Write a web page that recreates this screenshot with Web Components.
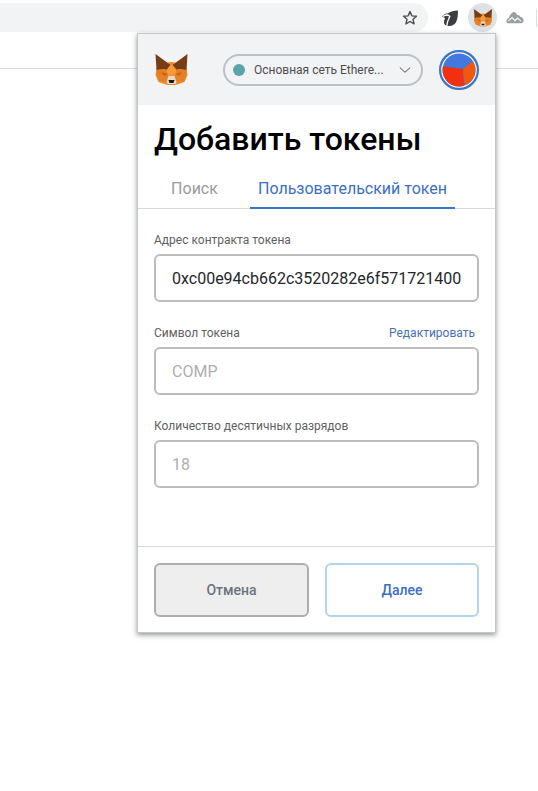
<!DOCTYPE html>
<html lang="ru">
<head>
<meta charset="utf-8">
<title>Добавить токены</title>
<style>
  html, body { margin: 0; height: 100%; background: #fff; }
  body { font-family: Roboto, "Liberation Sans", sans-serif; position: relative; height: 791px; overflow: hidden; }
</style>
</head>
<body>

<browser-toolbar></browser-toolbar>
<mm-popup>
  <mm-header slot="header"></mm-header>
  <mm-tabs slot="tabs" active="Пользовательский токен"></mm-tabs>
  <mm-field label="Адрес контракта токена" value="0xc00e94cb662c3520282e6f571721400"></mm-field>
  <mm-field label="Символ токена" action="Редактировать" placeholder="COMP"></mm-field>
  <mm-field label="Количество десятичных разрядов" placeholder="18"></mm-field>
  <mm-button slot="footer" kind="default">Отмена</mm-button>
  <mm-button slot="footer" kind="secondary">Далее</mm-button>
</mm-popup>

<script>
//fox head is shared between the toolbar and the popup header
const foxSvg = (w, h) => `
<svg width="${w}" height="${h}" viewBox="0 0 32 32" style="display:block">
  <polygon points="2,10 16,8 30,10 32,21 29,28 20,31 12,31 3,28 0,21" fill="#ee8a2a"/>
  <polygon points="0,0 15,11 11,16 9,15 1,16" fill="#763d16"/>
  <polygon points="32,0 17,11 21,16 23,15 31,16" fill="#763d16"/>
  <polygon points="1,16 9,15 11,16 13,22 11,28 4,27 1,21" fill="#e58024"/>
  <polygon points="31,16 23,15 21,16 19,22 21,28 28,27 31,21" fill="#e58024"/>
  <polygon points="11,16 15,11 17,11 21,16 19,22 13,22" fill="#f49a3c"/>
  <polygon points="5,18 12,20 9,22" fill="#b9661f"/>
  <polygon points="27,18 20,20 23,22" fill="#b9661f"/>
  <polygon points="13,22 19,22 21,28 20,30 12,30 11,28" fill="#ead9c4"/>
  <polygon points="13,26 19,26 18,29 14,29" fill="#20190f"/>
</svg>`

class BrowserToolbar extends HTMLElement {
  constructor() {
    super()
    this.attachShadow({ mode: "open" })
    this.shadowRoot.innerHTML = `
    <style>
      :host { display: block; height: 69px; box-sizing: border-box; border-bottom: 1px solid #dadce0; background: #fff; }
      .row { display: flex; align-items: center; height: 32px; }
      .omnibox { width: 428px; height: 29px; margin-top: 3px; flex: none; box-sizing: border-box; background: #f1f3f4;
        border-radius: 0 15px 15px 0; display: flex; align-items: center; justify-content: flex-end; padding-right: 10px; }
      .ext { display: flex; align-items: center; margin-left: 14px; margin-top: 3px; }
      .active { width: 29px; height: 29px; border-radius: 50%; background: #dee1e6; display: flex; align-items: center; justify-content: center; margin-left: 10px; }
      .cloud { margin-left: 9px; }
      .sep { width: 1px; height: 18px; background: #dadce0; margin-left: 12px; }
    </style>
    <div class="row">
      <div class="omnibox">
        <svg width="16" height="16" viewBox="0 0 16 16"><path d="M8 1.6l1.9 4.3 4.6.4-3.5 3 1.1 4.6L8 11.5l-4.1 2.4L5 9.3l-3.5-3 4.6-.4z" fill="none" stroke="#4a4d50" stroke-width="1.4" stroke-linejoin="round"/></svg>
      </div>
      <div class="ext">
        <svg width="16" height="16" viewBox="0 0 16 16"><path d="M16 0.500c0 9-1.500 15.500-9 15.500H6C4 16 2 14.500 2 12.500c0-1.500.3-3 1-4.500L0 6.500C1.500 4.500 3.500 3 5.500 3.500 8.500 1.500 12 .5 16 .5z" fill="#3b3e41"/><path d="M1 6.500c2.500-2 5-1.800 6.800-.3C6.500 9 5 12 4.800 16" fill="none" stroke="#fff" stroke-width="1.300"/><circle cx="5" cy="5.300" r=".7" fill="#fff"/></svg>
        <div class="active" id="fox"></div>
        <svg class="cloud" width="18" height="13" viewBox="0 0 18 13"><path d="M.8 12C0 9.500 1 7.500 2.800 7 3.600 4.500 5.500 1.500 7.800.8c1.700.5 2.800 2 3.400 3.200 1.200-.3 2.300.4 3 1.700 2.300.2 3.600 2.200 3.300 4.300-.2 1.200-1 2.200-2.200 2.200H2.500C1.700 12.200 1 12.200.8 12z" fill="#9c9fa2"/><path d="M2.500 9.800l3.500-3.200 3 3 2.500-2.500 3.500 3" fill="none" stroke="#fff" stroke-width="1.100"/></svg>
        <div class="sep"></div>
      </div>
    </div>`
    this.shadowRoot.querySelector("#fox").innerHTML = foxSvg(20, 18)
  }
}
customElements.define("browser-toolbar", BrowserToolbar)

//popup hangs over the page from the extension icon
class MmPopup extends HTMLElement {
  constructor() {
    super()
    this.attachShadow({ mode: "open" })
    this.shadowRoot.innerHTML = `
    <style>
      :host { display: flex; flex-direction: column; position: absolute; left: 137px; top: 33px; width: 359px; height: 600px;
        box-sizing: border-box; border: 1px solid #c4c6c8; background: #fff; box-shadow: 0 2px 5px rgba(60,64,67,.55); }
      h1 { margin: 0; padding: 13px 16px 0; font: 500 32px/42px Roboto, sans-serif; color: #000; white-space: nowrap; }
      .fields { display: flex; flex-direction: column; gap: 24px; padding: 24px 16px 0; flex: 1; }
      .footer { display: grid; grid-template-columns: 155px 154px; gap: 16px; padding: 16px 16px 15px; border-top: 1px solid #d6d9dc; }
    </style>
    <slot name="header"></slot>
    <h1>Добавить токены</h1>
    <slot name="tabs"></slot>
    <div class="fields"><slot></slot></div>
    <div class="footer"><slot name="footer"></slot></div>`
  }
}
customElements.define("mm-popup", MmPopup)

class MmHeader extends HTMLElement {
  constructor() {
    super()
    this.attachShadow({ mode: "open" })
    this.shadowRoot.innerHTML = `
    <style>
      :host { display: flex; align-items: center; height: 71px; flex: none; box-sizing: border-box; background: #f2f3f4; padding: 0 16px 0 17px; }
      .fox { width: 33px; flex: none; }
      .pill { margin-left: 35px; width: 200px; height: 32px; box-sizing: border-box; border: 2px solid #bbc0c5; border-radius: 16px; display: flex; align-items: center;
        padding-left: 8px; font: 400 12px Roboto, sans-serif; color: #4d4d4d; background: #f2f3f4; }
      .dot { width: 12px; height: 12px; border-radius: 50%; background: #5ba4aa; flex: none; margin-right: 9px; }
      .name { width: 132px; white-space: nowrap; }
      .chev { margin-left: 13px; }
      .avatar { margin-left: auto; width: 40px; height: 40px; flex: none; }
    </style>
    <div class="fox"></div>
    <div class="pill">
      <span class="dot"></span>
      <span class="name">Основная сеть Ethere...</span>
      <svg class="chev" width="12" height="8" viewBox="0 0 12 8"><path d="M.8 1.500L6 6.300l5.200-4.800" fill="none" stroke="#4a4d50" stroke-width="1"/></svg>
    </div>
    <svg class="avatar" viewBox="0 0 40 40">
      <defs><clipPath id="c"><circle cx="20" cy="20" r="16.500"/></clipPath></defs>
      <circle cx="20" cy="20" r="18.900" fill="#fff" stroke="#3b74c4" stroke-width="2.200"/>
      <g clip-path="url(#c)">
        <rect width="40" height="40" fill="#4378dc"/>
        <polygon points="2,16 24,19 25,38 2,38" fill="#f2300f"/>
        <polygon points="24,19 33,12 40,13 40,38 26,36" fill="#f2570f"/>
      </g>
    </svg>`
    this.shadowRoot.querySelector(".fox").innerHTML = foxSvg(33, 32)
  }
}
customElements.define("mm-header", MmHeader)

class MmTabs extends HTMLElement {
  constructor() {
    super()
    this.attachShadow({ mode: "open" })
    this.shadowRoot.innerHTML = `
    <style>
      :host { display: flex; flex: none; height: 44px; margin-top: 5px; box-sizing: border-box; border-bottom: 1px solid #d6d9dc; padding-left: 16px; font: 400 16px Roboto, sans-serif; color: #9b9b9b; }
      div { box-sizing: border-box; height: 44px; line-height: 48px; padding: 0 8px; border-bottom: 2px solid transparent; white-space: nowrap; text-align: center; }
      .search { width: 80px; padding: 0 0 0 1px; margin-right: 16px; }
      .on { width: 205px; color: #3b6fc4; border-bottom-color: #3b74c4; }
    </style>
    <div class="search">Поиск</div>
    <div class="on">Пользовательский токен</div>`
  }
}
customElements.define("mm-tabs", MmTabs)

class MmField extends HTMLElement {
  connectedCallback() {
    this.attachShadow({ mode: "open" })
    const value = this.getAttribute("value")
    const text = value || this.getAttribute("placeholder")
    const action = this.getAttribute("action")
    this.shadowRoot.innerHTML = `
    <style>
      :host { display: block; font-family: Roboto, sans-serif; }
      .top { display: flex; justify-content: space-between; height: 14px; margin-bottom: 7px; padding-right: 4px; font-size: 12px; line-height: 14px; color: #5f5f5f; }
      .action { color: #4a6fb5; }
      .box { height: 48px; box-sizing: border-box; border: 2px solid #bbbdbf; border-radius: 6px; padding: 0 16px; display: flex; align-items: center; font-size: 16px; white-space: nowrap; overflow: hidden; background: #fff; }
      .val { color: #24272a; }
      .ph { color: #aeaeae; }
    </style>
    <div class="top"><span>${this.getAttribute("label")}</span>${action ? `<span class="action">${action}</span>` : ""}</div>
    <div class="box"><span class="${value ? "val" : "ph"}">${text}</span></div>`
  }
}
customElements.define("mm-field", MmField)

class MmButton extends HTMLElement {
  constructor() {
    super()
    this.attachShadow({ mode: "open" })
    this.shadowRoot.innerHTML = `
    <style>
      :host { display: flex; align-items: center; justify-content: center; height: 54px; box-sizing: border-box; border-radius: 6px; font: 500 14px Roboto, sans-serif; }
      :host([kind="default"]) { background: #eeeeee; border: 2px solid #adadad; color: #6a737d; }
      :host([kind="secondary"]) { background: #fff; border: 2px solid #b3d4e8; color: #3b6fc4; }
    </style>
    <slot></slot>`
  }
}
customElements.define("mm-button", MmButton)
</script>
</body>
</html>
